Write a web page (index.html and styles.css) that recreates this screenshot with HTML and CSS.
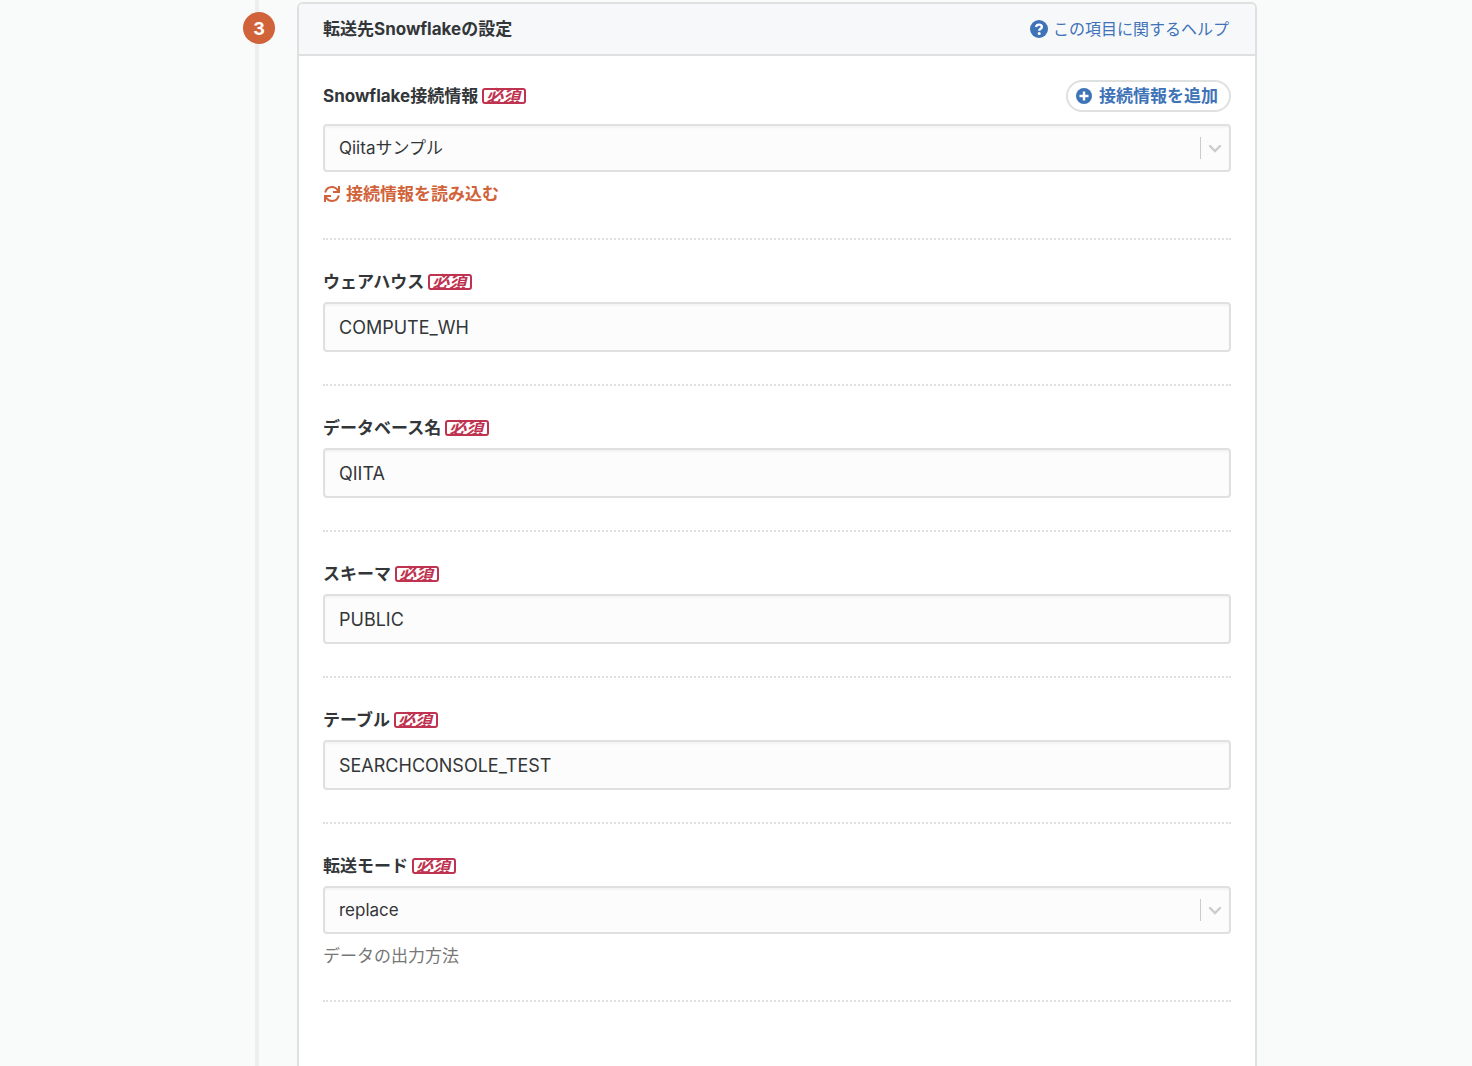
FILE: index.html
```html
<!DOCTYPE html>
<html lang="ja">
<head>
    <meta charset="UTF-8">
    <meta name="viewport" content="width=device-width, initial-scale=1.0">
    <title>転送先Snowflakeの設定</title>
    <link rel="stylesheet" href="styles.css">
</head>
<body>
    <main class="step">
        <div class="step-rail">
            <span class="step-number">3</span>
        </div>

        <section class="card">
            <header class="card-header">
                <h2 class="card-title">転送先Snowflakeの設定</h2>
                <a class="help-link" href="#">
                    <svg class="icon-help" viewBox="0 0 18 18" aria-hidden="true">
                        <circle cx="9" cy="9" r="9" fill="currentColor"/>
                        <path d="M6 7C6.400 5.200 7.500 4.600 9 4.600c1.700 0 2.900.9 2.900 2.300 0 1.900-2.700 1.800-2.700 3.900" fill="none" stroke="#fff" stroke-width="2.400"/>
                        <circle cx="9.200" cy="13.400" r="1.500" fill="#fff"/>
                    </svg>
                    この項目に関するヘルプ
                </a>
            </header>

            <form class="card-body">
                <div class="field">
                    <div class="field-head field-head-action">
                        <label class="field-label" for="connection">Snowflake接続情報</label>
                        <span class="required">必須</span>
                        <button type="button" class="add-button">
                            <svg class="icon-add" viewBox="0 0 16 16" aria-hidden="true">
                                <circle cx="8" cy="8" r="8" fill="currentColor"/>
                                <path d="M8 3.500v9M3.500 8h9" stroke="#fff" stroke-width="2.400"/>
                            </svg>
                            接続情報を追加
                        </button>
                    </div>
                    <div class="select-box">
                        <select class="control" id="connection">
                            <option>Qiitaサンプル</option>
                        </select>
                        <svg class="select-arrow" viewBox="0 0 30 22" aria-hidden="true">
                            <path d="M.5 0v22" stroke="#ccc"/>
                            <path d="M10 9l5 5 5-5" fill="none" stroke="#ccc" stroke-width="2.400" stroke-linecap="round"/>
                        </svg>
                    </div>
                    <button type="button" class="reload-button">
                        <svg class="icon-reload" viewBox="0 0 18 18" aria-hidden="true">
                            <path d="M2.200 7.500C3 4.200 5.600 2 9 2c2.600 0 4.700 1.300 6.200 4M15.800 10.500C15 13.800 12.400 16 9 16c-2.600 0-4.700-1.300-6.200-4" fill="none" stroke="currentColor" stroke-width="2"/>
                            <path d="M16 1v6h-6M2 17v-6h6" fill="none" stroke="currentColor" stroke-width="2"/>
                        </svg>
                        接続情報を読み込む
                    </button>
                </div>

                <div class="field">
                    <div class="field-head">
                        <label class="field-label" for="warehouse">ウェアハウス</label>
                        <span class="required">必須</span>
                    </div>
                    <input class="control" type="text" id="warehouse" value="COMPUTE_WH">
                </div>

                <div class="field">
                    <div class="field-head">
                        <label class="field-label" for="database">データベース名</label>
                        <span class="required">必須</span>
                    </div>
                    <input class="control" type="text" id="database" value="QIITA">
                </div>

                <div class="field">
                    <div class="field-head">
                        <label class="field-label" for="schema">スキーマ</label>
                        <span class="required">必須</span>
                    </div>
                    <input class="control" type="text" id="schema" value="PUBLIC">
                </div>

                <div class="field">
                    <div class="field-head">
                        <label class="field-label" for="table">テーブル</label>
                        <span class="required">必須</span>
                    </div>
                    <input class="control" type="text" id="table" value="SEARCHCONSOLE_TEST">
                </div>

                <div class="field">
                    <div class="field-head">
                        <label class="field-label" for="mode">転送モード</label>
                        <span class="required">必須</span>
                    </div>
                    <div class="select-box">
                        <select class="control" id="mode">
                            <option>replace</option>
                        </select>
                        <svg class="select-arrow" viewBox="0 0 30 22" aria-hidden="true">
                            <path d="M.5 0v22" stroke="#ccc"/>
                            <path d="M10 9l5 5 5-5" fill="none" stroke="#ccc" stroke-width="2.400" stroke-linecap="round"/>
                        </svg>
                    </div>
                    <p class="field-note">データの出力方法</p>
                </div>
            </form>
        </section>
    </main>
</body>
</html>
```
FILE: styles.css
```css
* {
    box-sizing: border-box;
}
body {
    margin: 0;
    font-family: Inter, "Noto Sans CJK JP", sans-serif;
    font-size: 17px;
    line-height: 24px;
    color: #333638;
    background-color: #f9fbfa;
}
button, input, select {
    font: inherit;
    color: inherit;
}


.step {
    display: flex;
    max-width: 1042px;
    min-height: 100vh;
    margin: 0 auto;
}
.step-rail {
    flex: none;
    display: flex;
    justify-content: center;
    align-items: flex-start;
    width: 82px;
    padding: 12px 0 0 6px;
    background: linear-gradient(#eee, #eee) 40px 0 / 4px 100% no-repeat;
}
.step-number {
    width: 32px;
    height: 32px;
    border-radius: 50%;
    background-color: #d1633a;
    color: white;
    font-size: 18px;
    font-weight: 700;
    line-height: 33px;
    text-align: center;
}


.card {
    flex: 1;
    margin-top: 2px;
    border: 2px solid #dfe0e0;
    border-bottom: none;
    border-radius: 6px 6px 0 0;
    background-color: white;
}
.card-header {
    display: flex;
    justify-content: space-between;
    align-items: center;
    height: 52px;
    padding: 0 26px 0 24px;
    border-bottom: 2px solid #dfe0e0;
    border-radius: 4px 4px 0 0;
    background-color: #f7f8fa;
}
.card-title {
    margin: 0;
    font-size: 17px;
    font-weight: 700;
}
.help-link {
    display: flex;
    align-items: center;
    gap: 5px;
    color: #3e73b8;
    font-size: 16px;
    text-decoration: none;
}
.icon-help {
    width: 18px;
    height: 18px;
}
.card-body {
    padding: 24px;
}


.field {
    margin-bottom: 30px;
    padding-bottom: 32px;
    border-bottom: 2px dotted #dfe0e0;
}
.field-head {
    display: flex;
    align-items: center;
    gap: 4px;
    margin-bottom: 8px;
}
.field-head-action {
    margin-bottom: 12px;
}
.field-label {
    font-weight: 700;
}
.required {
    height: 16px;
    padding: 0 4px 0 2px;
    border: 2px solid #bf3350;
    border-radius: 3px;
    color: #bf3350;
    font-style: italic;
    font-weight: 600;
    line-height: 12px;
}
.add-button {
    display: flex;
    align-items: center;
    gap: 7px;
    height: 32px;
    margin-left: auto;
    padding: 0 11px 0 8px;
    border: 2px solid #dfe0e0;
    border-radius: 16px;
    background-color: white;
    color: #3e73b8;
    font-weight: 600;
    cursor: pointer;
}
.icon-add {
    width: 16px;
    height: 16px;
}
.control {
    display: block;
    width: 100%;
    height: 50px;
    padding: 0 14px;
    border: 2px solid #dfe0e0;
    border-radius: 4px;
    background-color: #fcfcfc;
    box-shadow: inset 0 2px 2px #f4f4f4;
    font-size: 18px;
    appearance: none;
    outline: none;
}
.select-box {
    position: relative;
}
.select-box .control {
    height: 48px;
    font-size: 17px;
}
.select-arrow {
    position: absolute;
    top: 13px;
    right: 1px;
    width: 30px;
    height: 22px;
    pointer-events: none;
}
.reload-button {
    display: flex;
    align-items: center;
    gap: 5px;
    margin-top: 10px;
    padding: 0;
    border: none;
    background: none;
    color: #d1633a;
    font-weight: 600;
    cursor: pointer;
}
.icon-reload {
    width: 18px;
    height: 18px;
}
.field-note {
    margin: 10px 0 0;
    color: #777;
}
```
